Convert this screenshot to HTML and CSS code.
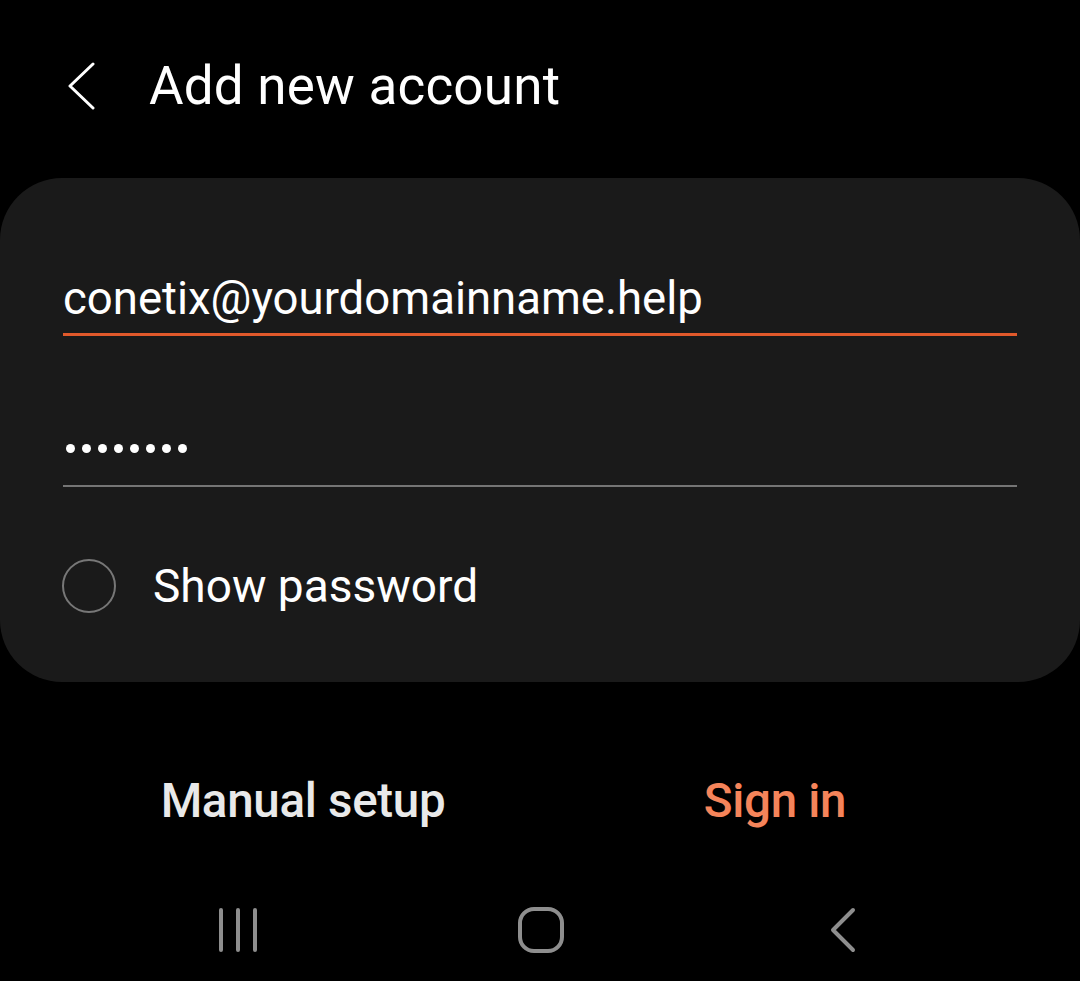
FILE: index.html
```html
<!DOCTYPE html>
<html lang="en">

<head>
    <meta charset="UTF-8">
    <meta name="viewport" content="width=device-width, initial-scale=1.0">
    <title>Add new account</title>

    <link rel="stylesheet" href="styles.css">
</head>

<body>
    <div class="top-bar">
        <svg class="back-icon" width="30" height="48" viewBox="0 0 30 48">
            <path d="M27 2 L4 24 L27 46" fill="none" stroke="#fff" stroke-width="3" stroke-linecap="round" stroke-linejoin="round" />
        </svg>
        <h1 class="title">Add new account</h1>
    </div>

    <div class="account-card">
        <div class="field field-active">conetix@yourdomainname.help</div>
        <div class="field field-password" aria-label="password">
            <span class="dot"></span><span class="dot"></span><span class="dot"></span><span class="dot"></span>
            <span class="dot"></span><span class="dot"></span><span class="dot"></span><span class="dot"></span>
        </div>

        <label class="show-password">
            <span class="radio"></span>
            <span>Show password</span>
        </label>
    </div>

    <div class="actions">
        <div class="action-button">Manual setup</div>
        <div class="action-button primary">Sign in</div>
    </div>

    <!-- system navigation bar -->
    <div class="nav-bar">
        <svg width="44" height="46" viewBox="0 0 44 46">
            <path d="M4 3 V43 M21 3 V43 M38 3 V43" stroke="#8e8e8e" stroke-width="4" stroke-linecap="round" />
        </svg>
        <svg class="home-icon" width="48" height="48" viewBox="0 0 48 48">
            <rect x="3" y="3" width="42" height="42" rx="14" fill="none" stroke="#8e8e8e" stroke-width="4" />
        </svg>
        <svg width="30" height="46" viewBox="0 0 30 46">
            <path d="M25 3 L5 23 L25 43" fill="none" stroke="#8e8e8e" stroke-width="4" stroke-linecap="round" stroke-linejoin="round" />
        </svg>
    </div>
</body>

</html>
```

FILE: styles.css
```css
body {
    font-family: Roboto, "Noto Sans", sans-serif;
    margin: 0;
    background-color: #000;
    color: #fff;
    width: 1080px;
    height: 981px;
    overflow: hidden;
}

.top-bar {
    display: flex;
    align-items: center;
    height: 178px;
    padding-left: 66px;
    padding-bottom: 6px;
    box-sizing: border-box;
}

.back-icon {
    margin-right: 53px;
}

.title {
    font-size: 53px;
    font-weight: 400;
    margin: 0;
    letter-spacing: 0.2px;
}

.account-card {
    background-color: #1a1a1a;
    border-radius: 62px;
    height: 504px;
    box-sizing: border-box;
    padding: 74px 63px 0;
}

.field {
    font-size: 45.5px;
    height: 84px;
    box-sizing: border-box;
    border-bottom: 2px solid #757575;
    padding-top: 20px;
    color: #fff;
}

.field-active {
    border-bottom: 3px solid #e0592b;
}

.field-password {
    display: flex;
    gap: 6.7px;
    margin-top: 67px;
    padding-top: 41px;
    padding-left: 3px;
}

.dot {
    width: 9.3px;
    height: 9.3px;
    border-radius: 50%;
    background-color: #fff;
}

.show-password {
    display: flex;
    align-items: center;
    margin-top: 72px;
    font-size: 46px;
}

.radio {
    width: 54px;
    height: 54px;
    border: 2px solid #777;
    border-radius: 50%;
    box-sizing: border-box;
    margin-right: 37px;
    margin-left: -1px;
}

.actions {
    display: grid;
    grid-template-columns: 1fr 1fr;
    margin-top: 91px;
    padding: 0 69px 0 67px;
}

.action-button {
    text-align: center;
    font-size: 47.5px;
    font-weight: 500;
    color: #e9e9e9;
    letter-spacing: -0.3px;
}

.action-button.primary {
    color: #f5845a;
}

.nav-bar {
    display: flex;
    justify-content: space-between;
    align-items: center;
    margin-top: 77px;
    padding: 0 222px 0 217px;
}

.home-icon {
    margin-right: 7px;
}
```
